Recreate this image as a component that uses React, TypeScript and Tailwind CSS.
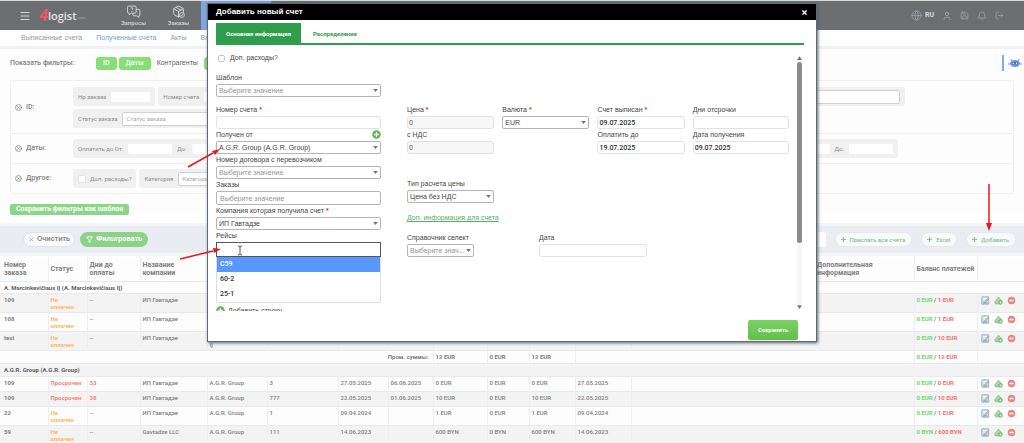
import { type ReactNode } from "react";
import {
  Bell,
  CircleX,
  Filter,
  Globe,
  LogOut,
  Menu,
  MessagesSquare,
  Package,
  Plus,
  Save,
  User,
  X,
} from "lucide-react";

type Row = {
  id: string;
  late?: boolean;
  days?: string;
  company: string;
  supplier: string;
  invoice?: string;
  date?: string;
  due?: string;
  sum?: string;
  paid: string;
  debt: string;
  tall?: boolean;
};

const FIRST_GROUP: Row[] = [
  { id: "109", company: "ИП Гавтадзе", supplier: "A. Marcinkevičiaus IĮ", paid: "0 EUR", debt: "1 EUR", tall: true },
  { id: "108", company: "ИП Гавтадзе", supplier: "A. Marcinkevičiaus IĮ", paid: "0 EUR", debt: "1 EUR", tall: true },
  { id: "test", company: "ИП Гавтадзе", supplier: "A. Marcinkevičiaus IĮ", paid: "0 EUR", debt: "10 EUR", tall: true },
];

const SECOND_GROUP: Row[] = [
  { id: "109", late: true, days: "33", company: "ИП Гавтадзе", supplier: "A.G.R. Group", invoice: "3", date: "27.05.2025", due: "06.06.2025", sum: "0 EUR", paid: "0 EUR", debt: "0 EUR" },
  { id: "109", late: true, days: "38", company: "ИП Гавтадзе", supplier: "A.G.R. Group", invoice: "777", date: "22.05.2025", due: "01.06.2025", sum: "10 EUR", paid: "0 EUR", debt: "10 EUR" },
  { id: "22", company: "ИП Гавтадзе", supplier: "A.G.R. Group", invoice: "1", date: "09.04.2024", sum: "1 EUR", paid: "0 EUR", debt: "1 EUR", tall: true },
  { id: "59", company: "Gavtadze LLC", supplier: "A.G.R. Group", invoice: "111", date: "14.06.2023", sum: "600 BYN", paid: "0 BYN", debt: "600 BYN", tall: true },
];

const Header = () => {
  return (
    <header className="flex h-[30px] items-center border-t border-[#d9dbdc] bg-[#6b6f72] text-white">
      <button aria-label="Меню" className="ml-[19px] text-[#d5d7d8]">
        <Menu size={12} strokeWidth={2} />
      </button>
      <a href="#" className="ml-2 flex w-[52px] items-center leading-4">
        <span className="text-[16px] font-bold text-[#f4555a] italic">4</span>
        <span className="font-['Open_Sans',sans-serif] text-[11px] font-semibold text-[#e4e5e6]">logist</span>
        <span className="mt-1 text-[4px] text-[#a9acae]">.com</span>
      </a>
      <nav className="ml-5 flex h-full flex-1 text-[6px] leading-[7px] font-medium text-[#d5d7d8]">
        <a href="#" className="flex w-[45px] flex-col items-center justify-center gap-px">
          <MessagesQuestion />
          Запросы
        </a>
        <a href="#" className="flex w-[45px] flex-col items-center justify-center gap-px">
          <OrderBox />
          Заказы
        </a>
        <a href="#" className="flex w-[70px] flex-col items-center justify-center bg-[#7fa6e0]">
          <MessagesSquare size={13} strokeWidth={1.5} />
        </a>
      </nav>
      <div className="mr-5 flex items-center gap-2 text-[#a0a4a7]">
        <button className="flex items-center gap-[3px] text-[7px] font-bold text-[#d5d7d8]">
          <Globe size={11} strokeWidth={1.6} className="text-[#a0a4a7]" />
          RU
        </button>
        <button aria-label="Профиль">
          <User size={10} />
        </button>
        <button aria-label="Журнал">
          <Save size={9} />
        </button>
        <button aria-label="Уведомления">
          <Bell size={10} />
        </button>
        <button aria-label="Выйти">
          <LogOut size={9} />
        </button>
      </div>
    </header>
  );
};

const MessagesQuestion = () => (
  <svg viewBox="0 0 26 24" width="14" height="13" fill="none" stroke="currentColor" strokeWidth="1.7" strokeLinejoin="round">
    <path d="M2 2h13q2 0 2 2v9q0 2-2 2H8l-4 3v-3H3q-2 0-2-2V4q0-2 1-2Z" />
    <path d="M17 8h5q2 0 2 2v8q0 2-2 2v3l-4-3h-5q-2 0-2-2v-3" />
    <path d="M7 6q0-1 2-1t2 2q0 1-2 2m0 2v1.5" />
  </svg>
);

const OrderBox = () => (
  <span className="relative">
    <Package size={13} strokeWidth={1.8} />
    <svg viewBox="0 0 10 10" className="absolute right-0 bottom-0 size-[6px]">
      <circle cx="5" cy="5" r="4" fill="#6b6f72" stroke="currentColor" strokeWidth="1.5" />
      <path d="m3 5 2 1.500 2-3" fill="none" stroke="currentColor" strokeWidth="1.200" />
    </svg>
  </span>
);

const SubNav = () => (
  <nav className="flex h-[19px] gap-[14px] overflow-hidden border-b-[3px] border-[#edf2f6] pl-[21px] font-['Liberation_Sans',sans-serif] text-[7px] leading-4 text-[#989898]">
    <a href="#">Выписанные счета</a>
    <a href="#" className="text-[#6f9ce8]">
      Полученные счета
    </a>
    <a href="#">Акты</a>
    <a href="#">Входящие</a>
  </nav>
);

const Chip = ({ children, on = false }: { children: ReactNode; on?: boolean }) => (
  <button
    className={
      on
        ? "h-[13px] rounded-[3px] bg-[#86de76] px-[7px] text-[7px] font-medium text-white"
        : "h-[13px] rounded-[3px] bg-white px-1 font-['Liberation_Sans',sans-serif] text-[7px] text-[#606060]"
    }
  >
    {children}
  </button>
);

const FilterField = ({ label, placeholder, wide = false }: { label: string; placeholder?: string; wide?: boolean }) => (
  <label className="flex items-center gap-[5px]">
    {label}
    <input
      placeholder={placeholder}
      className={
        placeholder
          ? "h-[14px] w-[124px] rounded-[2px] border border-[#d0d0d0] bg-white px-[3px] placeholder:text-[#a8a8a8]"
          : wide
            ? "h-[10px] w-11 rounded-[2px] bg-white"
            : "h-[10px] w-[39px] rounded-[2px] bg-white"
      }
    />
  </label>
);

const FilterGroup = ({ children }: { children: ReactNode }) => (
  <div className="flex h-[19px] items-center gap-[5px] rounded-[3px] bg-[#f0f0f0] px-[5px]">{children}</div>
);

const FilterRow = ({ title, children }: { title: string; children: ReactNode }) => (
  <div className="flex items-center border-b border-[#f0f0f0] last:border-b-0">
    <div className="flex w-[62px] shrink-0 items-center gap-1 pl-1 text-[7px] font-medium text-[#808080]">
      <CircleX size={7} strokeWidth={2.500} />
      {title}
    </div>
    <div className="flex flex-1 flex-col gap-[3px] text-[6px] whitespace-nowrap text-[#8c8c8c]">{children}</div>
  </div>
);

const Filters = () => (
  <section className="bg-[#fdfdfd] px-[10px] pt-[7px]">
    <div className="flex h-[14px] items-center gap-[2px]">
      <span className="w-[84px] text-[7px] font-medium text-[#808080]">Показать фильтры:</span>
      <Chip on>ID</Chip>
      <Chip on>Даты</Chip>
      <Chip>Контрагенты</Chip>
      <Chip on>Другое</Chip>
      <div className="-mr-2 ml-auto flex h-4 items-center border-l-2 border-[#7fabf0] pl-1">
        <button aria-label="Помощник">
          <svg viewBox="0 0 24 20" width="14" height="11">
            <path d="M6 5 4 2M18 5l2-3" stroke="#7fa0ea" strokeWidth="2" />
            <ellipse cx="12" cy="10" rx="9" ry="6.500" fill="#6f95e8" />
            <path d="M1 8v5M23 8v5" stroke="#8eaaf0" strokeWidth="2" />
            <rect x="6" y="7" width="12" height="5" rx="2.500" fill="#5570b4" />
            <circle cx="9" cy="9.500" r="1.300" fill="#fff" />
            <circle cx="15" cy="9.500" r="1.300" fill="#fff" />
          </svg>
        </button>
      </div>
    </div>
    <div className="mt-[10px] rounded-[3px] border border-[#f0f0f0]">
      <FilterRow title="ID:">
        <div className="mt-[6px] flex gap-[3px]">
          <FilterGroup>
            <FilterField label="Нр.заказа" />
          </FilterGroup>
          <FilterGroup>
            <FilterField label="Номер счета" />
          </FilterGroup>
          <div className="ml-auto pr-[108px]">
            <FilterGroup>
              <FilterField label="Статус" placeholder="Статус счета" />
            </FilterGroup>
          </div>
        </div>
        <div className="mb-[5px] flex">
          <FilterGroup>
            <FilterField label="Статус заказа" placeholder="Статус заказа" />
          </FilterGroup>
        </div>
      </FilterRow>
      <FilterRow title="Даты:">
        <div className="my-[5px] flex">
          <FilterGroup>
            <FilterField label="Оплатить до От:" wide />
            <FilterField label="До:" wide />
          </FilterGroup>
          <div className="ml-auto pr-[115px]">
            <FilterGroup>
              <FilterField label="От:" wide />
              <FilterField label="До:" wide />
            </FilterGroup>
          </div>
        </div>
      </FilterRow>
      <FilterRow title="Другое:">
        <div className="my-[5px] flex gap-[3px]">
          <FilterGroup>
            <label className="flex items-center gap-1">
              <input type="checkbox" className="size-[8px] appearance-none rounded-[2px] border border-[#dfe5ea] bg-white" />
              Доп. расходы?
            </label>
          </FilterGroup>
          <FilterGroup>
            <FilterField label="Категория" placeholder="Категория" />
          </FilterGroup>
        </div>
      </FilterRow>
    </div>
    <button className="mt-[10px] mb-2 block h-[11px] rounded-[2px] bg-[#8bd688] px-[6px] text-[7px] leading-[11px] font-bold text-white">
      Сохранить фильтры как шаблон
    </button>
  </section>
);

const PillButton = ({ children }: { children: ReactNode }) => (
  <button className="flex h-[15px] items-center gap-[3px] rounded-full border border-[#e6e8ea] bg-[#f8f9fa] px-1 text-[6px] font-medium text-[#84c490]">
    <Plus size={7} strokeWidth={4} />
    <span className="pr-[2px]">{children}</span>
  </button>
);

const Toolbar = () => (
  <div className="flex h-[33px] items-center gap-[9px] border-y-[3px] border-[#f3f6f8] bg-[#e9edf1] pr-2 pl-[23px] whitespace-nowrap">
    <button className="flex h-[15px] items-center gap-[2px] rounded-full border border-[#e0e3e6] bg-[#f8f9fa] px-1 font-['Liberation_Sans',sans-serif] text-[7px] font-bold text-[#8b8b8b]">
      <X size={7} />
      Очистить
    </button>
    <button className="-ml-1 flex h-[15px] items-center gap-[3px] rounded-full bg-[#8dd387] px-[6px] font-['Liberation_Sans',sans-serif] text-[7px] font-bold text-white">
      <Filter size={7} strokeWidth={3} />
      Фильтровать
    </button>
    <input aria-label="Поиск" className="ml-auto h-[15px] w-20 rounded-[3px] bg-white" />
    <PillButton>Прислать все счета</PillButton>
    <PillButton>Excel</PillButton>
    <PillButton>Добавить</PillButton>
  </div>
);

const Td = ({ children, plain = false }: { children?: ReactNode; plain?: boolean }) => (
  <td className={plain ? "px-[3px] pt-[2px] align-top" : "border-l border-[#ebeff2] px-[2px] pt-[2px] align-top first:border-l-0 first:pl-1"}>
    {children}
  </td>
);

const RowIcons = () => (
  <div className="flex gap-[4px] pl-px">
    <button aria-label="Редактировать">
      <svg viewBox="0 0 18 18" width="9" height="9">
        <rect x="1.500" y="1.500" width="14" height="15" rx="1" fill="#c5dcf5" stroke="#7fa9da" strokeWidth="1.500" />
        <path d="M4 5h8M4 8h5" stroke="#fff" strokeWidth="1.500" />
        <path d="m6 14 1-3 7-7 2 2-7 7Z" fill="#f0bd6a" stroke="#c9975b" strokeWidth=".8" />
        <path d="M4 14h9" stroke="#5b94cf" strokeWidth="1.500" />
      </svg>
    </button>
    <button aria-label="Добавить платеж">
      <svg viewBox="0 0 18 18" width="9" height="9">
        <path d="m1 12 8-10 7 8-4 6H3Z" fill="#a6cfa2" stroke="#7db57b" strokeWidth="1" />
        <path d="m4 12 5-6 4 5" fill="none" stroke="#c9e4c5" strokeWidth="1" />
        <circle cx="13" cy="13" r="4.300" fill="#71b86e" />
        <path d="M13 10.500v5M10.500 13h5" stroke="#fff" strokeWidth="1.200" />
      </svg>
    </button>
    <button aria-label="Удалить">
      <svg viewBox="0 0 18 18" width="9" height="9">
        <circle cx="9" cy="9" r="7" fill="#ef8580" stroke="#e0706b" strokeWidth="1" />
        <path d="M5 9h8" stroke="#fff" strokeWidth="3" />
      </svg>
    </button>
  </div>
);

const Balance = ({ paid, debt }: { paid: string; debt: string }) => (
  <span className="font-bold whitespace-nowrap text-[#808080]">
    <span className="text-[#6bdc6b]">{paid}</span> / <span className="text-[#f67272]">{debt}</span>
  </span>
);

const InvoiceRow = ({ row, gray }: { row: Row; gray: boolean }) => (
  <tr
    className={`${row.tall ? "h-[19px]" : "h-[15px]"} border-b border-[#e6eaec] ${gray ? "bg-[#f3f3f3]" : "bg-[#fdfdfd]"}`}
  >
    <Td>
      <b>{row.id}</b>
    </Td>
    <Td>
      {row.late ? (
        <span className="font-bold text-[#f98273]">Просрочен</span>
      ) : (
        <span className="font-bold text-[#ffb65c]">
          Не
          <br />
          оплачен
        </span>
      )}
    </Td>
    <Td>{row.days ? <span className="font-bold text-[#f98273]">{row.days}</span> : "--"}</Td>
    <Td>{row.company}</Td>
    <Td>{row.supplier}</Td>
    <Td>{row.invoice}</Td>
    <Td>{row.date}</Td>
    <Td>{row.due}</Td>
    <Td>{row.sum}</Td>
    <Td>{row.sum && row.paid}</Td>
    <Td>{row.sum}</Td>
    <Td>{row.date}</Td>
    <Td />
    <Td plain />
    <Td>
      <Balance paid={row.paid} debt={row.debt} />
    </Td>
    <Td>
      <RowIcons />
    </Td>
  </tr>
);

const Th = ({ children }: { children?: ReactNode }) => (
  <th className="border-l border-[#ebeff2] px-[2px] text-left align-middle first:border-l-0 first:pl-1">{children}</th>
);

const InvoiceTable = () => (
  <table className="mt-px w-full table-fixed border-collapse text-[6px] leading-[7px] font-medium text-[#808080]">
    <colgroup>
      <col className="w-[48px]" />
      <col className="w-[39px]" />
      <col className="w-[53px]" />
      <col className="w-[67px]" />
      <col className="w-[60px]" />
      <col className="w-[71px]" />
      <col className="w-[50px]" />
      <col className="w-[45px]" />
      <col className="w-[54px]" />
      <col className="w-[42px]" />
      <col className="w-[46px]" />
      <col className="w-[56px]" />
      <col />
      <col className="w-[100px]" />
      <col className="w-[63px]" />
      <col className="w-[47px]" />
    </colgroup>
    <thead>
      <tr className="h-6 border-b border-[#e6eaec] bg-[#fdfdfd] text-[7px] leading-[8px] text-[#7d7d7d]">
        <Th>Номер заказа</Th>
        <Th>Статус</Th>
        <Th>Дни до оплаты</Th>
        <Th>Название компании</Th>
        <Th />
        <Th />
        <Th />
        <Th />
        <Th />
        <Th />
        <Th />
        <Th />
        <Th />
        <th className="px-[3px] text-left align-middle">Дополнительная информация</th>
        <Th>Баланс платежей</Th>
        <Th />
      </tr>
    </thead>
    <tbody>
      <tr className="h-3 border-b border-[#e6eaec] bg-[#fdfdfd]">
        <th colSpan={16} className="pl-1 text-left text-[#606060]">
          A. Marcinkevičiaus IĮ (A. Marcinkevičiaus IĮ)
        </th>
      </tr>
      {FIRST_GROUP.map((row, i) => (
        <InvoiceRow key={row.id} row={row} gray={i % 2 === 0} />
      ))}
      <tr className="h-[13px] border-b border-[#e6eaec] bg-[#fdfdfd] font-bold">
        <td colSpan={8} className="pr-1 text-right">
          Пром. суммы:
        </td>
        <Td>12 EUR</Td>
        <Td>0 EUR</Td>
        <Td>12 EUR</Td>
        <Td />
        <Td plain />
        <Td plain />
        <Td>
          <Balance paid="0 EUR" debt="12 EUR" />
        </Td>
        <Td />
      </tr>
      <tr className="h-[13px] border-b border-[#e6eaec] bg-[#f3f3f3]">
        <th colSpan={16} className="pl-1 text-left text-[#606060]">
          A.G.R. Group (A.G.R. Group)
        </th>
      </tr>
      {SECOND_GROUP.map((row, i) => (
        <InvoiceRow key={i} row={row} gray={i % 2 === 1} />
      ))}
    </tbody>
  </table>
);

const FieldLabel = ({ id, children, required = false }: { id: string; children: ReactNode; required?: boolean }) => (
  <label htmlFor={id} className="block h-3 leading-3">
    {children}
    {required && <span className="font-bold text-red-500"> *</span>}
  </label>
);

type FieldProps = {
  id: string;
  label: string;
  value?: string;
  required?: boolean;
  muted?: boolean;
};

const SelectField = ({ id, label, value = "", required, muted }: FieldProps) => (
  <div>
    <FieldLabel id={id} required={required}>
      {label}
    </FieldLabel>
    <div className="relative">
      <select
        id={id}
        className={`block h-[13px] w-full appearance-none rounded-[2px] border border-[#b5b5b5] bg-white pr-2 pl-[2px] leading-[11px] ${muted ? "text-[#949494]" : "text-[#444]"}`}
      >
        <option>{value}</option>
      </select>
      <svg viewBox="0 0 8 5" className="pointer-events-none absolute top-[5px] right-[3px] h-[3px] w-[5px]">
        <path d="M0 0h8L4 5Z" fill="#777" />
      </svg>
    </div>
  </div>
);

const TextField = ({ id, label, value, required, muted }: FieldProps) => (
  <div>
    <FieldLabel id={id} required={required}>
      {label}
    </FieldLabel>
    <input
      id={id}
      defaultValue={value}
      className={`block h-[13px] w-full rounded-[3px] border border-[#e2e2e2] px-px font-[Roboto,sans-serif] ${muted ? "bg-[#f7f7f7] text-[#666]" : "bg-white font-medium text-[#333]"}`}
    />
  </div>
);

const GreenPlus = () => (
  <svg viewBox="0 0 16 16" width="9" height="9">
    <circle cx="8" cy="8" r="7.500" fill="#5cb553" />
    <path d="M8 4v8M4 8h8" stroke="#fff" strokeWidth="2.400" />
  </svg>
);

const InvoiceForm = () => (
  <form className="flex-1 pt-px font-['Liberation_Sans',sans-serif]">
    <label className="flex h-6 items-center gap-[5px] pl-[2px]">
      <input type="checkbox" className="size-[7px] appearance-none rounded-[2px] border border-[#bcc6cf] bg-white" />
      Доп. расходы?
    </label>
    <div className="mt-[2px] w-[165px]">
      <SelectField id="template" label="Шаблон" value="Выберите значение" muted />
    </div>
    <div className="mt-[7px] grid grid-cols-[165px_1fr] gap-[26px]">
      <div>
        <TextField id="number" label="Номер счета" required />
        <div className="relative">
          <SelectField id="supplier" label="Получен от" value="A.G.R. Group (A.G.R. Group)" />
          <button type="button" aria-label="Добавить контрагента" className="absolute top-px right-0">
            <GreenPlus />
          </button>
        </div>
        <SelectField id="contract" label="Номер договора с перевозчиком" value="Выберите значение" muted />
        <FieldLabel id="orders">Заказы</FieldLabel>
        <input
          id="orders"
          placeholder="Выберите значение"
          className="block h-[14px] w-full rounded-[2px] border border-[#b5b5b5] px-[3px] placeholder:text-[#949494]"
        />
        <SelectField id="company" label="Компания которая получила счет" value="ИП Гавтадзе" required />
        <FieldLabel id="trips">Рейсы</FieldLabel>
        <input id="trips" className="block h-[15px] w-full border border-[#555] px-1" />
        <ul role="listbox" className="rounded-b-[2px] border border-t-0 border-[#ddd] font-[Roboto,sans-serif] leading-[15px] font-medium text-[#333]">
          <li role="option" aria-selected className="bg-[#5897fb] px-[3px] text-white">
            C59
          </li>
          <li role="option" aria-selected={false} className="px-[3px]">
            60-2
          </li>
          <li role="option" aria-selected={false} className="px-[3px]">
            25-1
          </li>
        </ul>
        <button type="button" className="mt-[3px] flex items-center gap-[3px] leading-[9px]">
          <GreenPlus />
          Добавить строку
        </button>
      </div>
      <div>
        <div className="grid grid-cols-[87fr_87fr_87fr_96fr] gap-x-2">
          <TextField id="price" label="Цена" value="0" required muted />
          <SelectField id="currency" label="Валюта" value="EUR" required />
          <TextField id="issued" label="Счет выписан" value="09.07.2025" required />
          <TextField id="delay" label="Дни отсрочки" />
          <TextField id="vat" label="с НДС" value="0" muted />
          <div />
          <TextField id="due" label="Оплатить до" value="19.07.2025" />
          <TextField id="received" label="Дата получения" value="09.07.2025" />
        </div>
        <div className="mt-6 w-[87px]">
          <SelectField id="calc" label="Тип расчета цены" value="Цена без НДС" />
        </div>
        <a href="#" className="mt-2 block leading-[13px] text-[#52b063] underline">
          Доп. информация для счета
        </a>
        <div className="mt-2 flex gap-[65px]">
          <div className="w-[67px]">
            <SelectField id="directory" label="Справочник селект" value="Выберите знач..." muted />
          </div>
          <div className="w-[108px]">
            <TextField id="date" label="Дата" />
          </div>
        </div>
      </div>
    </div>
  </form>
);

const Scrollbar = () => (
  <div className="mt-[11px] mr-[2px] flex w-[5px] flex-col">
    <svg viewBox="0 0 8 6" className="h-1 w-full">
      <path d="M4 0 8 6H0Z" fill="#777" />
    </svg>
    <div className="mt-[2px] flex-1 bg-[#f6f6f6]">
      <div className="h-3/4 rounded-full bg-[#8b8b8b]" />
    </div>
    <svg viewBox="0 0 8 6" className="mt-px mb-[2px] h-1 w-full">
      <path d="M0 0h8L4 6Z" fill="#777" />
    </svg>
  </div>
);

const InvoiceDialog = () => (
  <div className="absolute inset-x-0 top-[3px] flex justify-center">
    <div
      role="dialog"
      aria-label="Добавить новый счет"
      className="w-[610px] max-w-full border border-[#5f6a72] bg-white text-[7px] text-[#444] shadow-[1px_1px_3px_#55606a]"
    >
      <div className="flex h-4 items-center justify-between bg-black pr-2 pl-2 text-white">
        <h2 className="font-['Liberation_Sans',sans-serif] text-[8px] leading-4 font-bold">Добавить новый счет</h2>
        <button aria-label="Закрыть">
          <X size={7} strokeWidth={4} />
        </button>
      </div>
      <div className="pt-[3px] pr-3 pl-2">
        <div role="tablist" className="flex h-[22px] border-b-2 border-[#2f9e4c] text-[6px] font-bold">
          <button role="tab" aria-selected className="bg-[#2f9e4c] px-[10px] text-white">
            Основная информация
          </button>
          <button role="tab" aria-selected={false} className="px-3 text-[#2f9e4c]">
            Распределение
          </button>
        </div>
        <div className="flex h-[60vh] gap-2 overflow-hidden">
          <InvoiceForm />
          <Scrollbar />
        </div>
      </div>
      <div className="flex justify-end pt-[9px] pr-[18px] pb-px">
        <button className="h-5 w-[50px] rounded-[2px] bg-linear-to-b from-[#79d163] to-[#60c04c] text-[6px] font-bold text-white">
          Сохранить
        </button>
      </div>
    </div>
  </div>
);

const Pointers = () => (
  <svg viewBox="0 0 1024 443" className="pointer-events-none absolute top-0 left-0 w-full">
    <g stroke="#f01414" strokeWidth="1.500" fill="#f01414">
      <path d="M188 167 213 153" />
      <path d="m220 149-5 6-3-4Z" stroke="none" />
      <path d="M180 259 213 251" />
      <path d="m221 249-7 4-1-5Z" stroke="none" />
      <path d="M989 184v41" />
      <path d="m989 231-3-8h6Z" stroke="none" />
    </g>
    <path d="M238 246q2 0 2 1 0-1 2-1m-2 1v7m-2 1q2 0 2-1 0 1 2 1" fill="none" stroke="#444" strokeWidth=".9" />
  </svg>
);

const App = () => {
  return (
    <div className="relative h-screen overflow-hidden bg-white font-[Roboto,sans-serif]">
      <Header />
      <SubNav />
      <Filters />
      <Toolbar />
      <InvoiceTable />
      <InvoiceDialog />
      <Pointers />
    </div>
  );
};

export default App;
